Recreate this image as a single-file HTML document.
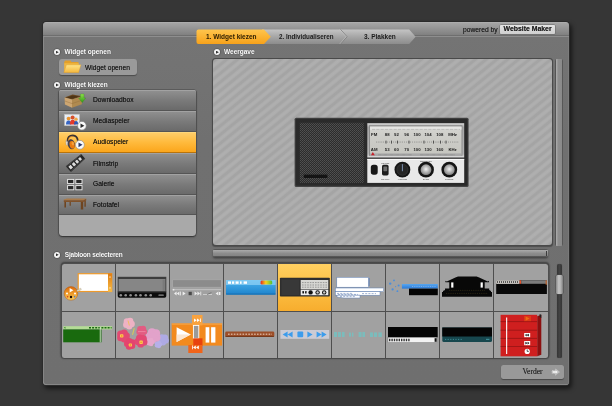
<!DOCTYPE html>
<html><head><meta charset="utf-8"><title>Widget kiezen</title>
<style>
*{box-sizing:border-box;margin:0;padding:0}
html,body{width:612px;height:406px;overflow:hidden;background:#363636;font-family:"Liberation Sans",sans-serif;font-size:6.7px;color:#222}
.abs,.abs *{position:absolute}
#dlg{position:absolute;left:43px;top:22px;width:526px;height:362.5px;background:#6e6e6e;border-radius:3.5px;box-shadow:0 0 0 1px #2b2b2b,2px 3px 4px 1px rgba(0,0,0,.55)}
#hdr{position:absolute;left:0;top:0;width:526px;height:15px;border-radius:3.5px 3.5px 0 0;background:linear-gradient(#b4b4b4 0,#a4a4a4 7%,#9a9a9a 30%,#7f7f7f 89%,#5e5e5e 91%,#5e5e5e 95.5%,#8e8e8e 96%,#8e8e8e 100%)}
#body{position:absolute;left:0;top:15px;width:526px;height:347.5px;background:linear-gradient(#747474,#707070 30%,#6f6f6f);border-radius:0 0 3.5px 3.5px;box-shadow:inset .7px -.7px 0 rgba(255,255,255,.22),inset -.7px 0 0 rgba(255,255,255,.1)}
.h{position:absolute;margin-top:.5px;color:#fff;font-weight:bold;font-size:6.5px;line-height:8px;white-space:nowrap;text-shadow:0 0 1px rgba(0,0,0,.5)}
.bul{position:absolute;width:6.2px;height:6.2px;margin-top:.5px;border-radius:50%;background:#f4f4f4;box-shadow:0 0 1px .5px rgba(0,0,0,.35)}
.bul:after{content:"";position:absolute;left:1.9px;top:1.4px;width:3px;height:3.2px;background:#333;clip-path:polygon(0 0,100% 50%,0 100%)}
.t{position:absolute;white-space:nowrap;line-height:8px;color:#141414;text-shadow:0 0 .5px rgba(0,0,0,.55)}

.mi{position:absolute;left:0;width:137px;height:21px;background:linear-gradient(#8f8f8f,#7a7a7a 50%,#6a6a6a);border-top:1px solid #a2a2a2;border-bottom:1px solid #555}
.mi.sel{background:linear-gradient(#ffcd68,#ffba3c 50%,#fba61c);border-top:1px solid #ffd77a;border-bottom:1px solid #b9740c}
</style></head><body>
<div id="wrap" style="position:absolute;left:0;top:0;width:612px;height:406px;will-change:transform">
<div id="dlg">
<div id="hdr"></div>
<div id="body"></div>
</div>

<!-- headings (page coordinates) -->
<div class="bul" style="left:53.8px;top:48.7px"></div><div class="h" style="left:64.4px;top:47.7px">Widget openen</div>
<div class="bul" style="left:54px;top:81.5px"></div><div class="h" style="left:64.4px;top:80.5px">Widget kiezen</div>
<div class="bul" style="left:214px;top:48.7px"></div><div class="h" style="left:224px;top:47.7px">Weergave</div>
<div class="bul" style="left:53.8px;top:251.3px"></div><div class="h" style="left:64.8px;top:250.3px;letter-spacing:-.2px">Sjabloon selecteren</div>

<!-- tabs -->
<svg style="position:absolute;left:190px;top:26px" width="230" height="22" viewBox="190 26 230 22">
<defs>
<linearGradient id="gT" x1="0" y1="0" x2="0" y2="1"><stop offset="0" stop-color="#c4c4c4"/><stop offset=".5" stop-color="#a6a6a6"/><stop offset="1" stop-color="#8c8c8c"/></linearGradient>
<linearGradient id="gO" x1="0" y1="0" x2="0" y2="1"><stop offset="0" stop-color="#ffc54d"/><stop offset="1" stop-color="#f7a21b"/></linearGradient>
</defs>
<path d="M262 29.5H409.2L415.6 36.7L409.2 44H262Z" fill="url(#gT)"/>
<path d="M340.5 29.5L347 36.7L340.5 44" fill="none" stroke="#777" stroke-width="0.8"/>
<path d="M339.7 29.5L346.2 36.7L339.7 44" fill="none" stroke="#d8d8d8" stroke-width="0.6" opacity=".7"/>
<path d="M198.5 29.5H264L270.8 36.7L264 44H198.5Q196.5 44 196.5 42V31.5Q196.5 29.5 198.5 29.5Z" fill="url(#gO)"/>
<text x="206" y="39.2" font-family="Liberation Sans, sans-serif" font-weight="bold" font-size="6.5" fill="#2a1c00">1. Widget kiezen</text>
<text x="279" y="39.2" font-family="Liberation Sans, sans-serif" font-weight="bold" font-size="6.5" textLength="54.5" lengthAdjust="spacingAndGlyphs" fill="#1a1a1a">2. Individualiseren</text>
<text x="364" y="39.2" font-family="Liberation Sans, sans-serif" font-weight="bold" font-size="6.5" fill="#1a1a1a">3. Plakken</text>
</svg>

<!-- powered by -->
<div class="t" style="left:463px;top:25.7px;font-size:6.7px;color:#1c1c1c">powered by</div>
<div style="position:absolute;left:500px;top:25px;width:55px;height:9px;background:linear-gradient(#e4e4e4,#cfcfcf);border-radius:1px;box-shadow:0 0 0 .5px #666"></div>
<div class="t" style="left:503.5px;top:25.1px;font-size:6.9px;font-weight:bold;color:#222">Website Maker</div>

<!-- widget openen button -->
<div style="position:absolute;left:58.7px;top:58.5px;width:78.8px;height:16.6px;background:#9a9a9a;border-radius:3px;box-shadow:0 1px 1px rgba(0,0,0,.35)"></div>
<div class="t" style="left:85px;top:64px;font-size:6.7px">Widget openen</div>

<!-- menu -->
<div id="menu" style="position:absolute;left:59px;top:90.3px;width:137px;height:145.7px;border-radius:2px 2px 3.5px 3.5px;overflow:hidden;background:#a9a9a9;box-shadow:0 1px 2px rgba(0,0,0,.5),0 0 0 .5px #4a4a4a">
<div class="mi" style="top:0.00px;height:20.86px"></div>
<div class="mi" style="top:20.86px;height:20.86px"></div>
<div class="mi sel" style="top:41.72px;height:20.86px"></div>
<div class="mi" style="top:62.58px;height:20.86px"></div>
<div class="mi" style="top:83.44px;height:20.86px"></div>
<div class="mi" style="top:104.30px;height:20.86px"></div>
</div>
<div class="t" style="left:93px;top:96.1px">Downloadbox</div>
<div class="t" style="left:93px;top:117.2px">Mediaspeler</div>
<div class="t" style="left:93px;top:138px">Audiospeler</div>
<div class="t" style="left:93px;top:159.8px">Filmstrip</div>
<div class="t" style="left:93px;top:180.2px">Galerie</div>
<div class="t" style="left:93px;top:201.1px">Fototafel</div>

<!-- preview -->
<div id="pv" style="position:absolute;left:211.5px;top:57.7px;width:341px;height:188.8px;border-radius:3.5px;background:#4a4a4a;box-shadow:0 1px 1px rgba(0,0,0,.3)">
<div style="position:absolute;left:1px;top:1px;right:1px;bottom:1px;border-radius:3px;background-color:#adadad;background-image:repeating-linear-gradient(141deg,rgba(0,0,0,0) 0,rgba(0,0,0,.05) 1.3px,rgba(0,0,0,.05) 3px,rgba(0,0,0,0) 4.3px,rgba(255,255,255,.03) 5.5px,rgba(0,0,0,0) 6.8px)"></div>
</div>
<!-- radio -->
<svg style="position:absolute;left:290px;top:114px" width="184" height="78" viewBox="290 114 184 78">
<defs>
<pattern id="mesh" width="2" height="2" patternUnits="userSpaceOnUse"><rect width="2" height="2" fill="#2c2c2c"/><rect x="0" y="0" width="1" height="1" fill="#515151"/><rect x="1" y="1" width="1" height="1" fill="#4a4a4a"/></pattern>
<linearGradient id="fr" x1="0" y1="0" x2="0" y2="1"><stop offset="0" stop-color="#d9d9d9"/><stop offset=".12" stop-color="#a8a8a8"/><stop offset=".9" stop-color="#b4b4b4"/><stop offset="1" stop-color="#e4e4e4"/></linearGradient>
<linearGradient id="gl" x1="0" y1="0" x2="0" y2="1"><stop offset="0" stop-color="#d4d4d0"/><stop offset=".5" stop-color="#cbcbc6"/><stop offset="1" stop-color="#c6c6c0"/></linearGradient>
<radialGradient id="kn" cx=".5" cy=".45" r=".5"><stop offset="0" stop-color="#f4f4f4"/><stop offset=".55" stop-color="#b9b9b9"/><stop offset="1" stop-color="#8a8a8a"/></radialGradient>
</defs>
<rect x="294.6" y="117.7" width="174" height="69.3" rx="1.6" fill="#454545"/>
<rect x="295.6" y="118.8" width="172" height="67" rx="1" fill="#2a2a2a"/>
<rect x="299.8" y="122.8" width="64" height="60.1" fill="url(#mesh)"/>
<rect x="303.8" y="174.6" width="23.6" height="3.4" fill="#141414"/>
<rect x="367.3" y="123.2" width="96.9" height="34.3" fill="url(#fr)"/>
<rect x="369" y="125.2" width="93.5" height="30.6" fill="#8c8c8c"/>
<rect x="370" y="126.6" width="91.5" height="28" fill="url(#gl)"/>
<rect x="370" y="126.6" width="91.5" height="3" fill="#e4e4e2"/><path d="M372 129.4H460" stroke="#555" stroke-width=".6" stroke-dasharray=".4 .9"/><rect x="370" y="153.4" width="91.5" height="2.6" fill="#a9a9a9"/><path d="M378 154.8H412M420 154.8H455" stroke="#666" stroke-width=".5" stroke-dasharray=".6 .6"/>
<path d="M371 155.3L372.8 152L374.8 155.3Z" fill="#c8202a"/>
<g font-family="Liberation Sans, sans-serif" font-size="4.3" font-weight="bold" fill="#1c1c1c"><text x="374.2" y="136" text-anchor="middle">FM</text><text x="387.2" y="136" text-anchor="middle">88</text><text x="396.5" y="136" text-anchor="middle">92</text><text x="406.7" y="136" text-anchor="middle">96</text><text x="417" y="136" text-anchor="middle">100</text><text x="428" y="136" text-anchor="middle">104</text><text x="439.8" y="136" text-anchor="middle">108</text><text x="452.6" y="136" text-anchor="middle">MHz</text><text x="374.2" y="151.2" text-anchor="middle">AM</text><text x="387.2" y="151.2" text-anchor="middle">53</text><text x="396.5" y="151.2" text-anchor="middle">60</text><text x="406.7" y="151.2" text-anchor="middle">70</text><text x="417" y="151.2" text-anchor="middle">100</text><text x="428" y="151.2" text-anchor="middle">130</text><text x="439.8" y="151.2" text-anchor="middle">160</text><text x="452.6" y="151.2" text-anchor="middle">KHz</text></g>
<rect x="385.65" y="140.6" width=".7" height="3" fill="#222"/><rect x="391.15" y="140.6" width=".7" height="3" fill="#222"/><rect x="397.15" y="140.6" width=".7" height="3" fill="#222"/><rect x="408.65" y="140.6" width=".7" height="3" fill="#222"/><rect x="423.65" y="140.6" width=".7" height="3" fill="#222"/><rect x="433.15" y="140.6" width=".7" height="3" fill="#222"/><rect x="440.15" y="140.6" width=".7" height="3" fill="#222"/><rect x="445.65" y="140.6" width=".7" height="3" fill="#222"/><rect x="376.00" y="141.2" width=".4" height="1.8" fill="#555" opacity=".6"/><rect x="377.90" y="141.2" width=".4" height="1.8" fill="#555" opacity=".6"/><rect x="379.80" y="141.2" width=".4" height="1.8" fill="#555" opacity=".6"/><rect x="381.70" y="141.2" width=".4" height="1.8" fill="#555" opacity=".6"/><rect x="383.60" y="141.2" width=".4" height="1.8" fill="#555" opacity=".6"/><rect x="385.50" y="141.2" width=".4" height="1.8" fill="#555" opacity=".6"/><rect x="387.40" y="141.2" width=".4" height="1.8" fill="#555" opacity=".6"/><rect x="389.30" y="141.2" width=".4" height="1.8" fill="#555" opacity=".6"/><rect x="391.20" y="141.2" width=".4" height="1.8" fill="#555" opacity=".6"/><rect x="393.10" y="141.2" width=".4" height="1.8" fill="#555" opacity=".6"/><rect x="395.00" y="141.2" width=".4" height="1.8" fill="#555" opacity=".6"/><rect x="396.90" y="141.2" width=".4" height="1.8" fill="#555" opacity=".6"/><rect x="398.80" y="141.2" width=".4" height="1.8" fill="#555" opacity=".6"/><rect x="400.70" y="141.2" width=".4" height="1.8" fill="#555" opacity=".6"/><rect x="402.60" y="141.2" width=".4" height="1.8" fill="#555" opacity=".6"/><rect x="404.50" y="141.2" width=".4" height="1.8" fill="#555" opacity=".6"/><rect x="406.40" y="141.2" width=".4" height="1.8" fill="#555" opacity=".6"/><rect x="408.30" y="141.2" width=".4" height="1.8" fill="#555" opacity=".6"/><rect x="410.20" y="141.2" width=".4" height="1.8" fill="#555" opacity=".6"/><rect x="412.10" y="141.2" width=".4" height="1.8" fill="#555" opacity=".6"/><rect x="414.00" y="141.2" width=".4" height="1.8" fill="#555" opacity=".6"/><rect x="415.90" y="141.2" width=".4" height="1.8" fill="#555" opacity=".6"/><rect x="417.80" y="141.2" width=".4" height="1.8" fill="#555" opacity=".6"/><rect x="419.70" y="141.2" width=".4" height="1.8" fill="#555" opacity=".6"/><rect x="421.60" y="141.2" width=".4" height="1.8" fill="#555" opacity=".6"/><rect x="423.50" y="141.2" width=".4" height="1.8" fill="#555" opacity=".6"/><rect x="425.40" y="141.2" width=".4" height="1.8" fill="#555" opacity=".6"/><rect x="427.30" y="141.2" width=".4" height="1.8" fill="#555" opacity=".6"/><rect x="429.20" y="141.2" width=".4" height="1.8" fill="#555" opacity=".6"/><rect x="431.10" y="141.2" width=".4" height="1.8" fill="#555" opacity=".6"/><rect x="433.00" y="141.2" width=".4" height="1.8" fill="#555" opacity=".6"/><rect x="434.90" y="141.2" width=".4" height="1.8" fill="#555" opacity=".6"/><rect x="436.80" y="141.2" width=".4" height="1.8" fill="#555" opacity=".6"/><rect x="438.70" y="141.2" width=".4" height="1.8" fill="#555" opacity=".6"/><rect x="440.60" y="141.2" width=".4" height="1.8" fill="#555" opacity=".6"/><rect x="442.50" y="141.2" width=".4" height="1.8" fill="#555" opacity=".6"/><rect x="444.40" y="141.2" width=".4" height="1.8" fill="#555" opacity=".6"/><rect x="446.30" y="141.2" width=".4" height="1.8" fill="#555" opacity=".6"/><rect x="448.20" y="141.2" width=".4" height="1.8" fill="#555" opacity=".6"/><rect x="450.10" y="141.2" width=".4" height="1.8" fill="#555" opacity=".6"/><rect x="452.00" y="141.2" width=".4" height="1.8" fill="#555" opacity=".6"/><rect x="453.90" y="141.2" width=".4" height="1.8" fill="#555" opacity=".6"/><rect x="455.80" y="141.2" width=".4" height="1.8" fill="#555" opacity=".6"/><rect x="457.70" y="141.2" width=".4" height="1.8" fill="#555" opacity=".6"/>
<rect x="367.3" y="158.9" width="96.9" height="24" fill="#e9e9e9"/>
<rect x="367.3" y="158.9" width="96.9" height="1" fill="#fff"/>
<rect x="370.8" y="164.8" width="6.9" height="9.9" rx="2.6" fill="#161616"/>
<rect x="382" y="164.8" width="6.6" height="10.6" rx="1.6" fill="#1c1c1c"/>
<rect x="383.4" y="166.6" width="3.8" height="4.6" rx=".8" fill="#6c6c6c"/>
<circle cx="402.4" cy="169.7" r="7.9" fill="#151515"/><circle cx="402.4" cy="169.7" r="5.6" fill="#262626" stroke="#3c3c3c" stroke-width=".6"/><rect x="401.9" y="164.2" width="1" height="7" fill="#7a8fb0"/>
<circle cx="426" cy="169.7" r="7.9" fill="#151515"/><circle cx="426" cy="169.7" r="5.4" fill="url(#kn)"/>
<circle cx="449.3" cy="169.7" r="7.9" fill="#151515"/><circle cx="449.3" cy="169.7" r="5.4" fill="url(#kn)"/>
<g font-family="Liberation Sans, sans-serif" font-size="2.2" fill="#444" text-anchor="middle"><text x="385.3" y="163.6">POWER</text><text x="385.3" y="180.4">ON-OFF</text><text x="402.4" y="180.4">VOLUME</text><text x="426" y="180.4">BAND</text><text x="449.3" y="180.4">TUNING</text><text x="426" y="161.6">SELECTOR</text></g>
</svg>

<!-- preview v-scroll -->
<div style="position:absolute;left:555.4px;top:58.5px;width:7.8px;height:187px;border-radius:2px;background:linear-gradient(90deg,#505050 0,#555 9%,#b2b2b2 12%,#a2a2a2 22%,#8e8e8e 40%,#8a8a8a 85%,#5a5a5a 91%,#505050)"></div>
<!-- preview h-scroll -->
<div style="position:absolute;left:212.5px;top:249.2px;width:335px;height:8.2px;border-radius:2px;background:linear-gradient(#4e4e4e 0,#585858 9%,#aaa 14%,#9e9e9e 30%,#8c8c8c 55%,#848484 84%,#5a5a5a 91%,#4e4e4e);box-shadow:0 1.5px 2px rgba(0,0,0,.4)"></div>
<div style="position:absolute;left:546px;top:251.4px;width:.9px;height:4.4px;background:#3c3c3c"></div>

<!-- template grid -->
<div id="grid" style="position:absolute;left:61px;top:263.2px;width:487.9px;height:95.3px;border-radius:3.5px;background:#4e4e4e;box-shadow:0 -1px 2px rgba(0,0,0,.4),0 1px 1.5px rgba(0,0,0,.35),0 0 1.5px rgba(0,0,0,.3)">
<div style="position:absolute;left:0.80px;top:0.80px;width:53.25px;height:47.00px;border-radius:2.5px 0 0 0;background:#a1a1a1"></div>
<div style="position:absolute;left:54.85px;top:0.80px;width:53.25px;height:47.00px;background:#a1a1a1"></div>
<div style="position:absolute;left:108.90px;top:0.80px;width:53.25px;height:47.00px;background:#a1a1a1"></div>
<div style="position:absolute;left:162.95px;top:0.80px;width:53.25px;height:47.00px;background:#a1a1a1"></div>
<div style="position:absolute;left:217.00px;top:0.80px;width:53.25px;height:47.00px;background:linear-gradient(#ffd061,#fcbe42 55%,#f7ad2e)"></div>
<div style="position:absolute;left:271.05px;top:0.80px;width:53.25px;height:47.00px;background:#a1a1a1"></div>
<div style="position:absolute;left:325.10px;top:0.80px;width:53.25px;height:47.00px;background:#a1a1a1"></div>
<div style="position:absolute;left:379.15px;top:0.80px;width:53.25px;height:47.00px;background:#a1a1a1"></div>
<div style="position:absolute;left:433.20px;top:0.80px;width:53.90px;height:47.00px;border-radius:0 2.5px 0 0;background:#a1a1a1"></div>
<div style="position:absolute;left:0.80px;top:48.60px;width:53.25px;height:45.90px;border-radius:0 0 0 2.5px;background:#a1a1a1"></div>
<div style="position:absolute;left:54.85px;top:48.60px;width:53.25px;height:45.90px;background:#a1a1a1"></div>
<div style="position:absolute;left:108.90px;top:48.60px;width:53.25px;height:45.90px;background:#a1a1a1"></div>
<div style="position:absolute;left:162.95px;top:48.60px;width:53.25px;height:45.90px;background:#a1a1a1"></div>
<div style="position:absolute;left:217.00px;top:48.60px;width:53.25px;height:45.90px;background:#a1a1a1"></div>
<div style="position:absolute;left:271.05px;top:48.60px;width:53.25px;height:45.90px;background:#a1a1a1"></div>
<div style="position:absolute;left:325.10px;top:48.60px;width:53.25px;height:45.90px;background:#a1a1a1"></div>
<div style="position:absolute;left:379.15px;top:48.60px;width:53.25px;height:45.90px;background:#a1a1a1"></div>
<div style="position:absolute;left:433.20px;top:48.60px;width:53.90px;height:45.90px;border-radius:0 0 2.5px 0;background:#a1a1a1"></div>
</div>
<!-- thumbnails -->
<svg style="position:absolute;left:61px;top:263px" width="488" height="96" viewBox="61 263 488 96">
<defs>
<linearGradient id="t1o" x1="0" y1="0" x2="0" y2="1"><stop offset="0" stop-color="#e07c10"/><stop offset="1" stop-color="#f6bb45"/></linearGradient>
<linearGradient id="t1p" x1="0" y1="0" x2="0" y2="1"><stop offset="0" stop-color="#d8680c"/><stop offset=".5" stop-color="#ee9a28"/><stop offset="1" stop-color="#f7cf62"/></linearGradient>
<linearGradient id="t4b" x1="0" y1="0" x2="0" y2="1"><stop offset="0" stop-color="#4db4ee"/><stop offset="1" stop-color="#1c82cc"/></linearGradient>
<linearGradient id="t4r" x1="0" y1="0" x2="1" y2="0"><stop offset="0" stop-color="#e8281c"/><stop offset=".45" stop-color="#f6d21c"/><stop offset="1" stop-color="#4cc43a"/></linearGradient>
<linearGradient id="t7b" x1="0" y1="0" x2="0" y2="1"><stop offset="0" stop-color="#5aa6ee"/><stop offset="1" stop-color="#2a7ad8"/></linearGradient>
</defs>
<!-- 1: orange box + palette -->
<rect x="78.2" y="273.7" width="33.5" height="17.8" fill="#fff" stroke="#ee9a2c" stroke-width="1.2"/>
<rect x="108" y="273.4" width="4" height="18.4" fill="url(#t1o)"/>
<path d="M109.2 277.4L110 276L110.8 277.4ZM109.2 287.6L110 289L110.8 287.6Z" fill="#fff"/>
<circle cx="71" cy="293.4" r="6.8" fill="url(#t1p)" stroke="#b85a08" stroke-width=".5"/>
<path d="M69.6 288L73.4 290.2L69.6 292.4Z" fill="#fff"/>
<circle cx="71" cy="297" r="1.2" fill="#1a0a00"/>
<circle cx="67" cy="293.6" r="1" fill="#fff"/><circle cx="75" cy="293.6" r="1" fill="#fff"/><circle cx="67.6" cy="296.8" r=".8" fill="#d83a1a"/><circle cx="74.6" cy="296.8" r=".8" fill="#3a7ad8"/>
<path d="M76.6 290.4L80.6 288.2L81.4 289.4L77.4 291.8Z" fill="#e8e0c8" stroke="#8a7a5a" stroke-width=".3"/>
<!-- 2: dark player -->
<rect x="117.7" y="276.8" width="48.6" height="15" fill="#3c3c3c"/>
<rect x="118.6" y="279" width="46.8" height="12.4" fill="#868686"/>
<rect x="162.6" y="279.6" width="2.2" height="11.2" fill="#7a7a7a"/>
<path d="M117.7 291.5H166.3V296Q166.3 297.8 164.5 297.8H119.5Q117.7 297.8 117.7 296Z" fill="#0c0c0c"/>
<path d="M118 292H166" stroke="#5c5c5c" stroke-width=".5"/>
<g fill="#8e8e8e"><circle cx="120.8" cy="295.2" r="1.3"/><circle cx="125.7" cy="295.2" r="1.3"/><circle cx="130.6" cy="295.2" r="1.3"/><circle cx="135.9" cy="295.2" r="1.3"/><circle cx="140.5" cy="295.2" r="1.3"/><circle cx="145.8" cy="295.2" r="1.3"/><circle cx="150.7" cy="295.2" r="1.3"/><rect x="158.4" y="294.6" width="5.4" height="1.2" rx=".5"/></g>
<!-- 3: grey player -->
<rect x="172.7" y="279.8" width="48.6" height="7.4" fill="#8b8b8b" stroke="#acacac" stroke-width=".6"/>
<rect x="172.7" y="289.2" width="48.6" height="1" fill="#c4c4c4"/><rect x="172.7" y="288.9" width="1.6" height="1.6" fill="#e8e8e8"/>
<g fill="#eee"><path d="M176.6 291.6V295.4L174 293.5ZM179.4 291.6V295.4L176.8 293.5Z"/><rect x="180" y="291.6" width=".8" height="3.8"/><path d="M182.6 291.6L185.6 293.5L182.6 295.4Z"/><path d="M194.6 291.6L197.2 293.5L194.6 295.4ZM197.4 291.6L200 293.5L197.4 295.4Z"/><rect x="200.4" y="291.6" width=".8" height="3.8"/><rect x="203" y="294.2" width="9" height=".8" opacity=".7"/><path d="M215.6 293.5L218.4 291.4V295.6Z"/><rect x="219" y="292" width="1.4" height="3"/></g>
<rect x="188.6" y="291.8" width="3.2" height="3.4" fill="#4a4a4a"/>
<path d="M207 294.6L211.4 292.6" stroke="#5a5a5a" stroke-width=".6"/>
<!-- 4: blue bar -->
<rect x="226" y="280" width="49.6" height="14.7" rx=".8" fill="url(#t4b)"/>
<rect x="226" y="280" width="49.6" height="5" fill="#8fd0f4" opacity=".75"/>
<g fill="#fff"><rect x="228" y="281.4" width="3" height="2.4"/><rect x="232" y="281.4" width="2.2" height="2.4"/><rect x="235.6" y="281.4" width="3" height="2.4"/><rect x="240" y="281.4" width="1.6" height="2.4"/><rect x="243.6" y="281.4" width="3.4" height="2.4"/></g>
<rect x="260.6" y="280.4" width="11.6" height="4.2" rx="1.4" fill="url(#t4r)"/>
<rect x="226" y="293.4" width="49.6" height="1.3" fill="#176aa8" opacity=".6"/>
<!-- 5: radio thumb -->
<rect x="279.9" y="277.8" width="49.9" height="18.7" rx=".8" fill="#2e2e2e"/>
<rect x="281.4" y="279.4" width="18" height="15.6" fill="#383838"/>
<rect x="300.7" y="280" width="27.6" height="9" fill="#d8d8d4"/>
<path d="M302 282.6H327M302 285H327M302 287.2H327" stroke="#6a6a6a" stroke-width=".6" stroke-dasharray="1.6 1"/>
<rect x="300.7" y="289.6" width="27.6" height="5.6" fill="#ececec"/>
<rect x="302.4" y="291" width="1.6" height="2.6" rx=".6" fill="#111"/><rect x="305" y="291" width="1.6" height="2.6" rx=".4" fill="#222"/>
<circle cx="310.6" cy="292.4" r="2.2" fill="#111"/><circle cx="317.6" cy="292.4" r="2.2" fill="#111"/><circle cx="317.6" cy="292.4" r="1.2" fill="#ccc"/><circle cx="324.2" cy="292.4" r="2.2" fill="#111"/><circle cx="324.2" cy="292.4" r="1.2" fill="#ccc"/>
<!-- 6: white sketch -->
<g stroke="#5d7fb4" stroke-width=".5" fill="#fff">
<rect x="336.8" y="277.3" width="31.8" height="9.9"/>
<rect x="335.4" y="288" width="48.2" height="3.7"/>
<rect x="335.4" y="291.7" width="44.6" height="3.5"/>
<path d="M337 295.2H360V298H344L337 297Z"/>
</g>
<rect x="368.6" y="278" width="1.2" height="8" fill="#5d7fb4" opacity=".7"/>
<path d="M337 293.4H352M338 294.4H358M362 293.6H376M340 296.6H356" stroke="#3d63a4" stroke-width=".6" stroke-dasharray="2 1.2" opacity=".8"/>
<!-- 7: blue splash -->
<rect x="401.9" y="284" width="35.9" height="4.6" fill="url(#t7b)"/>
<path d="M412 286.4H436" stroke="#d6e8fa" stroke-width=".5" stroke-dasharray="1 .8" opacity=".8"/>
<rect x="409" y="288.6" width="28.8" height="6.6" fill="#050505"/>
<g fill="#4a8edc"><circle cx="390.2" cy="283.6" r="1.2"/><circle cx="394" cy="280.4" r=".9"/><circle cx="392.6" cy="289.4" r="1.1"/><circle cx="397.4" cy="291.2" r=".9"/><circle cx="398.6" cy="285.4" r="1"/><circle cx="395.6" cy="286.6" r=".6"/></g>
<!-- 8: temple -->
<path d="M455.4 277.4L458 276.6H476.6L479.2 277.4L487.8 281.4L489 280.8V282.2H484.7V288.5H489.2V290L491 291V292H492V296.8H442V292H443V291L445 290V288.5H449.3V282.2H445.4V280.8L446.8 281.4Z" fill="#080808"/>
<rect x="451.2" y="282.4" width="2.2" height="5.2" fill="#fff"/><rect x="480.6" y="282.4" width="2.2" height="5.2" fill="#fff"/>
<path d="M446 293.4H488M449 290.4H485" stroke="#6a5a2a" stroke-width=".4" stroke-dasharray="1.2 1" opacity=".8"/>
<!-- 9: black bar -->
<rect x="496.2" y="280.3" width="50.7" height="13.7" fill="#080808"/>
<rect x="496.2" y="280.3" width="23.4" height="3.5" fill="#e6e2dc"/>
<path d="M497 282H519" stroke="#2a2a2a" stroke-width="1.4" stroke-dasharray="1.2 .8"/>
<rect x="519.6" y="280.3" width="1.6" height="3.5" fill="#e8522a"/>
<rect x="521.2" y="280.3" width="25.7" height="3.5" fill="#7c7c7c"/>
<rect x="545.6" y="280.3" width="1.3" height="4.5" fill="#c8642a" opacity=".8"/>
<!-- 10: green -->
<rect x="63.2" y="326.2" width="49" height="3.2" fill="#b4dc96"/>
<path d="M89 327.8H111.6" stroke="#1a6a10" stroke-width="1.6" stroke-dasharray="2 1.1"/>
<path d="M64 327.8l1.4-1v2z" fill="#1a6a10"/>
<rect x="63.2" y="329.4" width="38.3" height="12.9" fill="#196a0e"/>
<rect x="99.8" y="327" width=".8" height="15.3" fill="#e8f4e0"/>
<!-- 11: flowers -->
<g>
<g fill="#eeb2c4" opacity="1"><circle cx="131.6" cy="324.0" r="3.2"/><circle cx="129.2" cy="326.3" r="3.2"/><circle cx="126.3" cy="324.7" r="3.2"/><circle cx="126.9" cy="321.5" r="3.2"/><circle cx="130.1" cy="321.0" r="3.2"/><circle cx="128.8" cy="323.5" r="2.5"/></g>
<g fill="#aeaae4" opacity="1"><circle cx="165.8" cy="340.5" r="3.1"/><circle cx="163.2" cy="342.3" r="3.1"/><circle cx="160.7" cy="340.3" r="3.1"/><circle cx="161.8" cy="337.4" r="3.1"/><circle cx="165.0" cy="337.5" r="3.1"/><circle cx="163.3" cy="339.6" r="2.4"/></g>
<g fill="#b6b0e8" opacity="1"><circle cx="160.1" cy="344.5" r="2.1"/><circle cx="158.9" cy="346.2" r="2.1"/><circle cx="156.8" cy="345.6" r="2.1"/><circle cx="156.8" cy="343.4" r="2.1"/><circle cx="158.9" cy="342.8" r="2.1"/><circle cx="158.3" cy="344.5" r="1.6"/></g>
<g fill="#e2a2ca" opacity="1"><circle cx="156.4" cy="337.4" r="4.1"/><circle cx="152.7" cy="339.0" r="4.1"/><circle cx="149.9" cy="336.0" r="4.1"/><circle cx="152.0" cy="332.4" r="4.1"/><circle cx="156.0" cy="333.3" r="4.1"/><circle cx="153.4" cy="335.6" r="3.1"/></g>
<g fill="#e6a8cc" opacity="1"><circle cx="152.5" cy="342.0" r="2.3"/><circle cx="151.1" cy="343.9" r="2.3"/><circle cx="148.9" cy="343.2" r="2.3"/><circle cx="148.9" cy="340.8" r="2.3"/><circle cx="151.1" cy="340.1" r="2.3"/><circle cx="150.5" cy="342" r="1.8"/></g>
<g fill="#e25c82" opacity="1"><circle cx="144.2" cy="331.7" r="3.0"/><circle cx="141.8" cy="333.6" r="3.0"/><circle cx="139.3" cy="331.9" r="3.0"/><circle cx="140.1" cy="329.0" r="3.0"/><circle cx="143.1" cy="328.8" r="3.0"/><circle cx="141.7" cy="331" r="2.3"/></g>
<g fill="#e24a72" opacity="1"><circle cx="126.3" cy="335.9" r="3.6"/><circle cx="124.2" cy="338.8" r="3.6"/><circle cx="120.7" cy="337.7" r="3.6"/><circle cx="120.7" cy="334.1" r="3.6"/><circle cx="124.2" cy="333.0" r="3.6"/><circle cx="123.2" cy="335.9" r="2.8"/></g>
<g fill="#e4446e" opacity="1"><circle cx="132.1" cy="345.7" r="3.2"/><circle cx="129.0" cy="346.5" r="3.2"/><circle cx="127.2" cy="343.7" r="3.2"/><circle cx="129.3" cy="341.2" r="3.2"/><circle cx="132.4" cy="342.4" r="3.2"/><circle cx="130" cy="343.9" r="2.5"/></g>
<g fill="#e24a74" opacity="1"><circle cx="143.9" cy="342.1" r="3.6"/><circle cx="140.7" cy="343.9" r="3.6"/><circle cx="138.1" cy="341.4" r="3.6"/><circle cx="139.6" cy="338.1" r="3.6"/><circle cx="143.2" cy="338.5" r="3.6"/><circle cx="141.1" cy="340.8" r="2.8"/></g>
<path d="M134.3 328.2L132.5 334.8" stroke="#d6c85a" stroke-width="1.1"/><path d="M128 320.5L129.4 325.5" stroke="#f0c060" stroke-width="1"/>
<path d="M138 331.6H145.6" stroke="#f08aa6" stroke-width=".8"/>
<rect x="120" y="334.2" width="3.4" height="3.4" rx=".8" fill="#fbd04a"/><rect x="128.8" y="343.4" width="3.2" height="3.2" rx=".8" fill="#fbd04a"/><rect x="139.4" y="340.6" width="3.4" height="3.4" rx=".8" fill="#fbd04a"/>
<circle cx="121.7" cy="335.9" r=".9" fill="#f6923a"/><circle cx="130.4" cy="345" r=".9" fill="#f6923a"/><circle cx="141.1" cy="342.3" r=".9" fill="#f6923a"/>
</g>
<!-- 12: orange player -->
<rect x="171.7" y="323.4" width="50.4" height="22.2" fill="#f28a1e"/>
<rect x="171.7" y="323.4" width="50.4" height="1.4" fill="#f8a648" opacity=".8"/>
<path d="M176.6 327.2L190.8 334.6L176.6 342Z" fill="#fff"/><path d="M176.6 334.6H190.8L176.6 342Z" fill="#fbe6d2"/>
<rect x="205.6" y="327.2" width="3.7" height="15.4" fill="#fff"/><rect x="211.1" y="327.2" width="4.3" height="15.4" fill="#fff"/>
<rect x="192" y="315" width="10.5" height="10.4" fill="#f8a23e"/>
<path d="M194 318.4L196.8 320.2L194 322ZM197 318.4L199.8 320.2L197 322ZM200 318.4H200.8V322H200Z" fill="#fff"/>
<rect x="193.4" y="325.4" width="5.4" height="13" fill="#9a9a9a" stroke="#fff" stroke-width=".9"/>
<rect x="193.3" y="338.3" width="9.2" height="7.4" fill="#e8420e"/>
<rect x="188.3" y="345" width="14.2" height="8" fill="#f0641a"/>
<path d="M198.8 345.6L196 347.4L198.8 349.2ZM195.8 345.6L193 347.4L195.8 349.2ZM192.2 345.6H193V349.2H192.2Z" fill="#fff"/>
<!-- 13: brown bar -->
<rect x="225.2" y="331.6" width="49.1" height="5.4" rx="1.4" fill="#9c4e28"/>
<path d="M228 334.3H272" stroke="#e6c8b4" stroke-width="1.6" stroke-dasharray="1.6 1.3" opacity=".75"/>
<rect x="225.2" y="336.2" width="49.1" height=".8" rx=".4" fill="#6a3216"/>
<!-- 14: blue buttons -->
<rect x="280.4" y="330" width="48.8" height="8.8" fill="#cbcbd4"/>
<g fill="#3c9cec"><path d="M287.6 331.4V337.4L282.6 334.4ZM292.6 331.4V337.4L287.6 334.4Z"/><rect x="297.4" y="331.6" width="5.8" height="5.6" rx="1"/><path d="M307.4 331.4L312.6 334.4L307.4 337.4Z"/><path d="M316.6 331.4L321.6 334.4L316.6 337.4ZM321.6 331.4L326.6 334.4L321.6 337.4Z"/></g>
<!-- 15: cyan text -->
<g fill="#62cfcf" opacity=".6"><rect x="334" y="332" width="3" height="5"/><rect x="338" y="332" width="3" height="5"/><rect x="342" y="332" width="2.6" height="5"/><rect x="349" y="332.6" width="2" height="4"/><rect x="352" y="332.6" width="1.4" height="4"/><rect x="358.6" y="332" width="3" height="5"/><rect x="362.4" y="332" width="2.6" height="5"/><rect x="370" y="332.4" width="3" height="4.6"/><rect x="374" y="332.4" width="3" height="4.6"/><rect x="378.4" y="332.4" width="3.4" height="4.6"/></g>
<!-- 16: black + film -->
<rect x="388" y="327" width="49.7" height="10.3" fill="#050505"/>
<rect x="388" y="337.3" width="48.9" height="5.4" fill="#f2f2f2" stroke="#555" stroke-width=".4"/>
<path d="M389 340H410" stroke="#333" stroke-width="2.4" stroke-dasharray="1.4 1"/>
<rect x="434.6" y="338.2" width="2" height="3.6" fill="#111"/>
<!-- 17: black + teal -->
<path d="M442.3 327.5H492V340.4Q492 342 490.4 342H443.9Q442.3 342 442.3 340.4Z" fill="#17474e"/>
<rect x="442.3" y="327.5" width="49.7" height="9" fill="#050505"/>
<path d="M445 339.4H462" stroke="#3c8a92" stroke-width="1" stroke-dasharray="1.2 1.4"/><rect x="486" y="338.8" width="3.4" height="1.2" fill="#3c8a92"/>
<!-- 18: red box -->
<path d="M537.2 316.2L541.3 314.8V354.8L537.2 356.3Z" fill="#8c1010"/>
<path d="M539.6 314L541.3 314.8V318L539.6 317Z" fill="#222"/>
<rect x="500.6" y="314.8" width="36.6" height="41.5" fill="#cf1f1f"/>
<path d="M500.6 321.6H537.2M500.6 330.2H537.2M500.6 338.4H537.2M500.6 346.5H537.2" stroke="#8e1212" stroke-width=".7"/>
<rect x="506.1" y="317.5" width="1.1" height="36.5" fill="#fff"/>
<path d="M525.6 316.4L529.6 318.6L525.6 320.8Z" fill="#f07a1a"/><rect x="524" y="316" width="7" height="5.2" fill="#e85a10" opacity=".45"/>
<rect x="524.2" y="333" width="6" height="4.2" fill="#fff"/><path d="M528.8 333.8V336.4L526.6 335.1ZM526.6 333.8V336.4L525 335.1Z" fill="#111"/>
<rect x="524.2" y="341" width="6" height="4.2" fill="#fff"/><path d="M525.4 341.8V344.4L527.4 343.1ZM527.6 341.8V344.4L529.4 343.1Z" fill="#111"/>
<circle cx="527.2" cy="351.4" r="2.6" fill="#fff"/><path d="M527.2 349.4V351.4H528.8" stroke="#111" stroke-width=".7" fill="none"/>
</svg>

<!-- grid scrollbar -->
<div style="position:absolute;left:557px;top:263.5px;width:5.2px;height:94px;border-radius:1.5px;background:linear-gradient(90deg,#353535,#424242 50%,#353535);box-shadow:0 0 1px rgba(0,0,0,.4)"></div>
<div style="position:absolute;left:556px;top:274.5px;width:7px;height:19px;border-radius:1.5px;background:linear-gradient(90deg,#8a8a8a,#c4c4c4 40%,#b0b0b0 70%,#7c7c7c);box-shadow:0 0 0 .5px #4a4a4a"></div>

<!-- Verder -->
<div style="position:absolute;left:500.5px;top:364.5px;width:63.5px;height:14.5px;border-radius:2.5px;background:#999;box-shadow:0 1px 1px rgba(0,0,0,.35)"></div>
<div class="t" style="left:522.4px;top:367.5px;font-family:'Liberation Serif',serif;font-size:7.6px;color:#2a2a2a">Verder</div>
<svg style="position:absolute;left:550px;top:367px" width="12" height="10" viewBox="550 367 12 10"><path d="M552 370.6H555.4V368.8L559.6 372L555.4 375.2V373.4H552Z" fill="#bdbdbd" stroke="#d2d2d2" stroke-width=".7" stroke-dasharray=".8 .7"/><path d="M552.8 371.3H555.8V370.6L557.8 372L555.8 373.4V372.7H552.8Z" fill="#f6f6f6"/></svg>

<!-- menu icons -->
<svg style="position:absolute;left:56px;top:56px" width="40" height="160" viewBox="56 56 40 160">
<defs>
<linearGradient id="fo" x1="0" y1="0" x2="0" y2="1"><stop offset="0" stop-color="#ffe58a"/><stop offset="1" stop-color="#f4b63a"/></linearGradient>
<linearGradient id="gr" x1="0" y1="0" x2="0" y2="1"><stop offset="0" stop-color="#8ee04a"/><stop offset="1" stop-color="#2f9a18"/></linearGradient>
<linearGradient id="hp" x1="0" y1="0" x2="1" y2="1"><stop offset="0" stop-color="#ffb43a"/><stop offset="1" stop-color="#d86a08"/></linearGradient>
</defs>
<!-- folder -->
<path d="M64.2 62L65.2 60.4H70.4L71.4 62H78.4V64H64.2Z" fill="#e3a02a"/>
<path d="M64.2 63.2H78.8V72.4H64.2Z" fill="#f0b640"/>
<path d="M66.4 64.8H81L78.6 72.6H63.8Z" fill="url(#fo)" stroke="#d9972a" stroke-width=".4"/>
<!-- downloadbox -->
<path d="M64.6 97.4L72.6 94.6L82.2 96.2L72 99.6Z" fill="#6a4922"/>
<path d="M66.6 97.5L72.6 95.5L79.4 96.6L72 98.8Z" fill="#4e3416"/>
<path d="M64.6 97.4L72 99.6V107.8L64.9 104.6Z" fill="#cda672"/>
<path d="M72 99.6L82.2 96.2L81.8 104.2L72 107.8Z" fill="#b08a50"/>
<path d="M64.9 101L72 103.6M72 103.6L82 100.2" stroke="#8f6a38" stroke-width=".4" fill="none"/>
<path d="M80.4 94H84V98H85.8L82.2 102.6L78.6 98H80.4Z" fill="url(#gr)" stroke="#2e8a18" stroke-width=".3"/>
<!-- mediaspeler -->
<rect x="64.6" y="114.4" width="14.8" height="11.2" fill="#f4f4f4" stroke="#c9c9c9" stroke-width=".4"/>
<rect x="65.6" y="115.4" width="12.8" height="9.2" fill="#dfe9f6"/>
<circle cx="68.6" cy="118.6" r="1.9" fill="#e8932c"/><path d="M66 124.6Q66 120.6 68.6 120.6Q71.2 120.6 71.2 124.6Z" fill="#3565c4"/>
<circle cx="72.6" cy="117.6" r="2" fill="#d8502a"/><path d="M69.8 124.6Q69.8 119.8 72.6 119.8Q75.6 119.8 75.6 124.6Z" fill="#e23a2a"/>
<circle cx="76" cy="119.2" r="1.7" fill="#f0a848"/><path d="M74 124.6Q74 121 76 121Q78.2 121 78.2 124.6Z" fill="#2f57b4"/>
<circle cx="81.9" cy="125.7" r="4.3" fill="#fafafa" stroke="#8a8a8a" stroke-width=".6"/><path d="M80.5 123.4L84.4 125.7L80.5 128Z" fill="#2c2c2c"/>
<!-- audiospeler -->
<ellipse cx="67" cy="142.6" rx="1.2" ry="3" fill="#e6e0d6" stroke="#8a7a60" stroke-width=".3"/>
<path d="M67.4 141.4Q67.4 135.4 72.8 135.3Q77.4 135.6 77.8 140.6" fill="none" stroke="#3a3232" stroke-width="1.7"/>
<path d="M68 140.6Q68.4 136.4 72.8 136.2" fill="none" stroke="#e8861a" stroke-width=".6"/>
<ellipse cx="71.3" cy="144.2" rx="3.6" ry="5.1" transform="rotate(-12 71.3 144.2)" fill="#46424e"/>
<ellipse cx="72.1" cy="144.8" rx="2.5" ry="3.9" transform="rotate(-12 72.1 144.8)" fill="#ea7a10"/>
<ellipse cx="72.8" cy="143.6" rx="1.2" ry="2" transform="rotate(-12 72.8 143.6)" fill="#f6a03a"/>
<circle cx="79.9" cy="144.8" r="4.4" fill="#fafafa" stroke="#8a8a8a" stroke-width=".6"/><path d="M78.5 142.4L82.5 144.8L78.5 147.2Z" fill="#2a386a"/>
<!-- filmstrip -->
<g transform="translate(75.9 162.6) rotate(-41)">
<path d="M-10 -3.9L9.6 -3.1V3.1L-10 3.9Z" fill="#262626"/>
<rect x="-8.4" y="-1.8" width="3" height="3.6" fill="#dcdcdc"/><rect x="-4" y="-1.7" width="2.8" height="3.4" fill="#dcdcdc"/><rect x=".2" y="-1.6" width="2.7" height="3.2" fill="#dcdcdc"/><rect x="4.2" y="-1.5" width="2.6" height="3" fill="#dcdcdc"/>
<path d="M-9.6 -3.1L9.2 -2.5M-9.6 3.1L9.2 2.5" stroke="#8a8a8a" stroke-width=".5" stroke-dasharray=".8 .8"/>
</g>
<!-- galerie -->
<g fill="#2a2a2a" stroke="#ececec" stroke-width=".9"><rect x="67.6" y="179.4" width="6.2" height="4.2"/><rect x="75.8" y="179.4" width="6.2" height="4.2"/><rect x="67.6" y="185.6" width="6.2" height="4.2"/><rect x="75.8" y="185.6" width="6.2" height="4.2"/></g>
<!-- fototafel -->
<path d="M63.8 199.6L67 198.6H86.2L83.4 200.2H63.8Z" fill="#a87a4a"/>
<path d="M63.8 200.2H83.4L86.2 198.8V200.6L83.4 202H63.8Z" fill="#80522a"/>
<path d="M64.4 202H66V207.6H64.4ZM80.8 202H83.2V209.6H80.8ZM84.4 200.8H85.8V206.8H84.4ZM69.6 202H70.8V205.8H69.6Z" fill="#6e4420"/>
</svg>

</div>
</body></html>
